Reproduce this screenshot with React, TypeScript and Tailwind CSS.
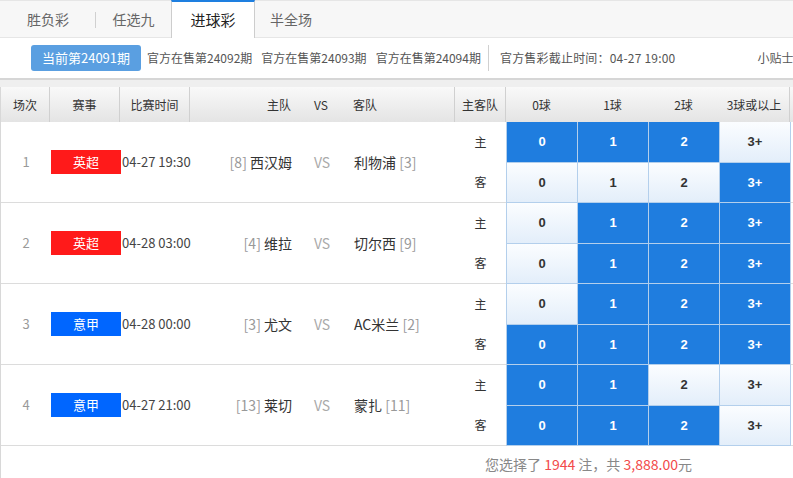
const matches = [
  { no: 1, league: "英超", red: true, time: "04-27 19:30", homeRank: 8, home: "西汉姆", away: "利物浦", awayRank: 3, sel: [[1, 1, 1, 0], [0, 0, 0, 1]] },
  { no: 2, league: "英超", red: true, time: "04-28 03:00", homeRank: 4, home: "维拉", away: "切尔西", awayRank: 9, sel: [[0, 1, 1, 1], [0, 1, 1, 1]] },
  { no: 3, league: "意甲", red: false, time: "04-28 00:00", homeRank: 3, home: "尤文", away: "AC米兰", awayRank: 2, sel: [[0, 1, 1, 1], [1, 1, 1, 1]] },
  { no: 4, league: "意甲", red: false, time: "04-27 21:00", homeRank: 13, home: "莱切", away: "蒙扎", awayRank: 11, sel: [[1, 1, 0, 0], [1, 1, 1, 0]] },
];

const goals = ["0", "1", "2", "3+"];

const Cell = ({ on, label }: { on: number; label: string }) => (
  <div
    className={`w-[71px] h-full flex items-center justify-center border-r border-b border-[#b3cfec] font-['Liberation_Sans',sans-serif] font-bold text-[13px] ${
      on ? "bg-[#1f7ddf] text-white" : "bg-gradient-to-b from-[#fbfdff] to-[#e3eefa] text-[#333]"
    }`}
  >
    {label}
  </div>
);

export default function App() {
  return (
    <div className="w-[793px] h-[478px] overflow-hidden bg-white font-['Noto_Sans_CJK_SC',sans-serif] text-[#333]">
      {/* tabs */}
      <div className="h-[38px] flex bg-[#f7f7f7] border-t border-[#e6e6e6] border-b border-[#cdcdcd] text-[14px] text-[#666]">
        <div className="w-[96px] flex items-center justify-center relative">
          胜负彩
          <span className="absolute right-0 top-[11px] h-[16px] w-px bg-[#d0d0d0]" />
        </div>
        <div className="w-[75px] flex items-center justify-center">任选九</div>
        <div className="w-[84px] h-[38px] -mt-px flex items-center justify-center bg-white border-t-2 border-[#1e7fe0] border-x border-x-[#cdcdcd] text-[#222] text-[15px]">
          进球彩
        </div>
        <div className="w-[72px] flex items-center justify-center">半全场</div>
      </div>

      {/* issue bar */}
      <div className="h-[42px] flex items-center pl-[31px] border-b-2 border-[#d6d6d6] text-[12px] text-[#555] whitespace-nowrap overflow-hidden">
        <div className="shrink-0 w-[110px] h-[26px] rounded-[3px] bg-[#5a9fe1] text-white text-[13px] flex items-center justify-center">
          当前第24091期
        </div>
        <span className="shrink-0 ml-[6px]">官方在售第24092期</span>
        <span className="shrink-0 ml-[9px]">官方在售第24093期</span>
        <span className="shrink-0 ml-[9px]">官方在售第24094期</span>
        <span className="shrink-0 ml-[7px] w-px h-[26px] bg-[#d0d0d0]" />
        <span className="shrink-0 ml-[11px] tracking-[0.2px]">官方售彩截止时间：04-27 19:00</span>
        <span className="shrink-0 ml-[82px]">小贴士</span>
      </div>
      <div className="h-[7px] bg-[#efefef]" />

      {/* header */}
      <div className="h-[35px] flex bg-gradient-to-b from-[#f9f9f9] to-[#e4e4e4] text-[12px] text-[#333] border-l border-[#d8d8d8]">
        <div className="w-[49px] flex items-center justify-center border-r border-[#d0d0d0]">场次</div>
        <div className="w-[70px] flex items-center justify-center border-r border-[#d0d0d0]">赛事</div>
        <div className="w-[70px] flex items-center justify-center border-r border-[#d0d0d0]">比赛时间</div>
        <div className="w-[265px] flex items-center border-r border-[#d0d0d0]">
          <span className="w-[111px] text-right pr-[10px]">主队</span>
          <span className="w-[40px] text-center">VS</span>
          <span className="pl-[12px]">客队</span>
        </div>
        <div className="w-[51px] flex items-center justify-center border-r border-[#d0d0d0]">主客队</div>
        {["0球", "1球", "2球", "3球或以上"].map((g, i) => (
          <div key={g} className={`w-[71px] flex items-center justify-center ${i === 3 ? "border-r border-[#d0d0d0]" : ""}`}>
            {g}
          </div>
        ))}
      </div>

      {/* rows */}
      {matches.map((m) => (
        <div key={m.no} className="h-[81px] flex border-l border-[#d8d8d8]">
          <div className="w-[505px] flex items-center border-b border-[#dcdcdc]">
            <div className="w-[50px] text-center text-[13px] text-[#999]">{m.no}</div>
            <div className={`w-[70px] h-[24px] flex items-center justify-center text-white text-[13px] ${m.red ? "bg-[#ff1a1a]" : "bg-[#0066ff]"}`}>
              {m.league}
            </div>
            <div className="w-[70px] pl-px text-[13px] text-[#444]">{m.time}</div>
            <div className="w-[111px] text-right pr-[10px] text-[14px]">
              <span className="text-[#999]">[{m.homeRank}]</span> {m.home}
            </div>
            <div className="w-[40px] text-center text-[14px] text-[#aaa]">VS</div>
            <div className="w-[113px] pl-[12px] text-[14px] whitespace-nowrap">
              {m.away} <span className="text-[#999]">[{m.awayRank}]</span>
            </div>
            <div className="w-[51px] h-full flex flex-col text-[12px] text-[#333]">
              <div className="h-[41px] flex items-center justify-center">主</div>
              <div className="h-[40px] flex items-center justify-center">客</div>
            </div>
          </div>
          <div className="flex flex-col border-l border-[#b3cfec]">
            {m.sel.map((row, r) => (
              <div key={r} className={`flex ${r === 0 ? "h-[41px]" : "h-[40px]"}`}>
                {row.map((on, c) => (
                  <Cell key={c} on={on} label={goals[c]} />
                ))}
              </div>
            ))}
          </div>
          <div className="flex-1 border-b border-[#dcdcdc]" />
        </div>
      ))}

      {/* summary */}
      <div className="h-[36px] flex items-center border-l border-[#d8d8d8] pl-[484px] text-[14px] text-[#888] whitespace-nowrap">
        您选择了&nbsp;<span className="text-[#f24a4a]">1944</span>&nbsp;注，共&nbsp;<span className="text-[#f24a4a]">3,888.00</span>元
      </div>
    </div>
  );
}
